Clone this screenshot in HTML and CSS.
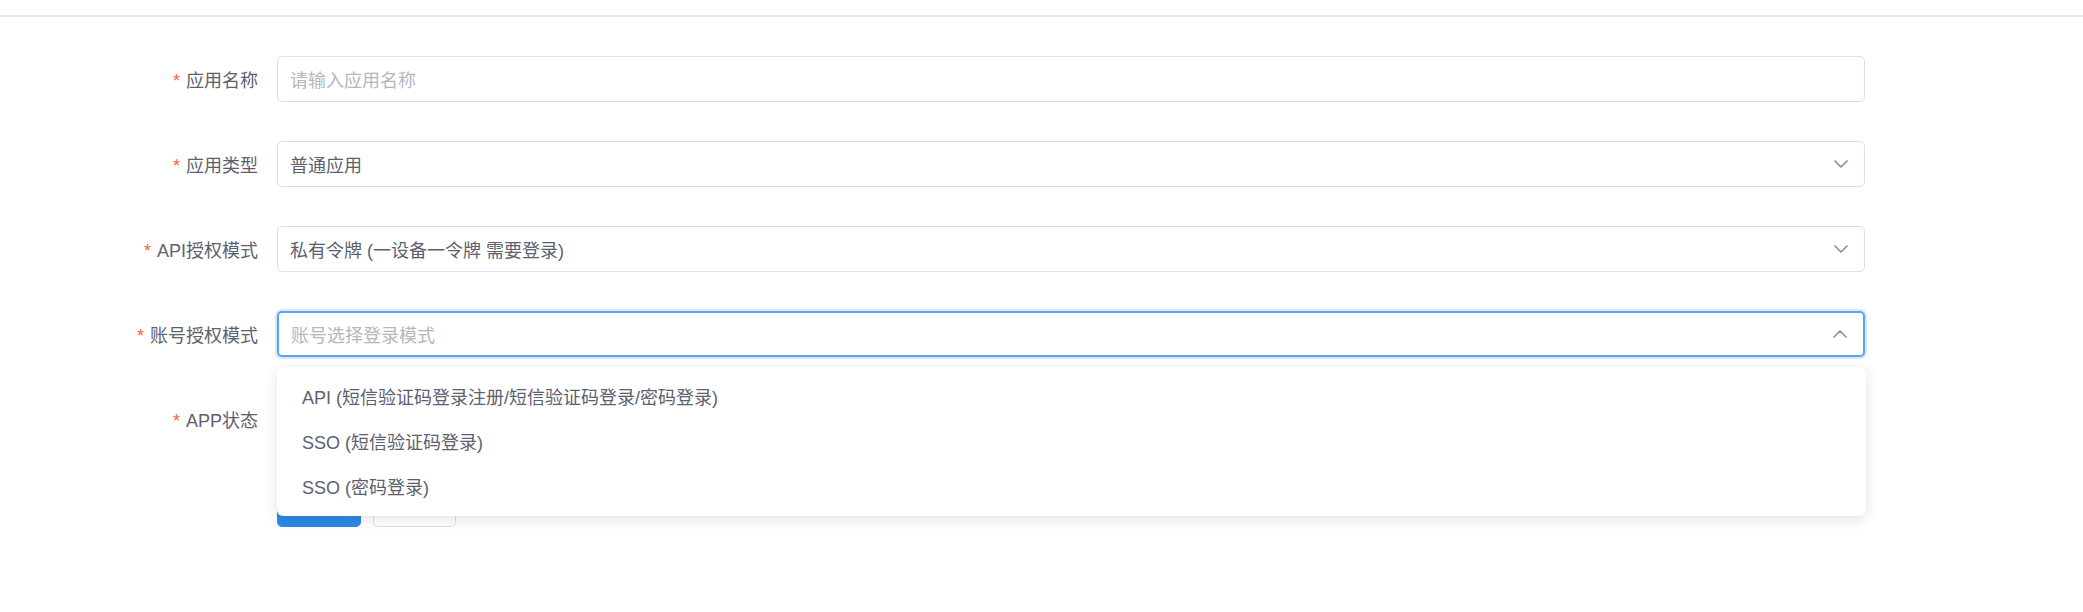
FILE: index.html
```html
<!DOCTYPE html>
<html lang="zh-CN">
<head>
<meta charset="utf-8">
<title>应用配置</title>
<link rel="stylesheet" href="styles.css">
</head>
<body>
<div class="topbar"></div>
<form class="form">
  <div class="item">
    <label class="label"><span class="req">*</span>应用名称</label>
    <div class="control">
      <div class="input"><span class="placeholder">请输入应用名称</span></div>
    </div>
  </div>
  <div class="item">
    <label class="label"><span class="req">*</span>应用类型</label>
    <div class="control">
      <div class="input select"><span class="value">普通应用</span>
        <svg class="arrow" width="14" height="8" viewBox="0 0 14 8"><path d="M1 1 L7 7 L13 1" fill="none" stroke="#8e929b" stroke-width="1.7" stroke-linecap="round" stroke-linejoin="round"/></svg>
      </div>
    </div>
  </div>
  <div class="item">
    <label class="label"><span class="req">*</span>API授权模式</label>
    <div class="control">
      <div class="input select"><span class="value">私有令牌 (一设备一令牌 需要登录)</span>
        <svg class="arrow" width="14" height="8" viewBox="0 0 14 8"><path d="M1 1 L7 7 L13 1" fill="none" stroke="#8e929b" stroke-width="1.7" stroke-linecap="round" stroke-linejoin="round"/></svg>
      </div>
    </div>
  </div>
  <div class="item">
    <label class="label"><span class="req">*</span>账号授权模式</label>
    <div class="control">
      <div class="input select focused"><span class="placeholder">账号选择登录模式</span>
        <svg class="arrow" width="14" height="8" viewBox="0 0 14 8"><path d="M1 7 L7 1 L13 7" fill="none" stroke="#8e929b" stroke-width="1.7" stroke-linecap="round" stroke-linejoin="round"/></svg>
      </div>
      <ul class="dropdown">
        <li>API (短信验证码登录注册/短信验证码登录/密码登录)</li>
        <li>SSO (短信验证码登录)</li>
        <li>SSO (密码登录)</li>
      </ul>
    </div>
  </div>
  <div class="item">
    <label class="label"><span class="req">*</span>APP状态</label>
    <div class="control"><div class="blank"></div></div>
  </div>
  <div class="item">
    <div class="label"></div>
    <div class="control buttons">
      <button type="button" class="btn primary">确定</button>
      <button type="button" class="btn">取消</button>
    </div>
  </div>
</form>
</body>
</html>
```
FILE: styles.css
```css
* { box-sizing: border-box; }
html, body { margin: 0; padding: 0; background: #fff; }
body {
  font-family: "Liberation Sans", "Noto Sans CJK SC", sans-serif;
  font-size: 18px;
  color: #5c6170;
}
.topbar {
  height: 17px;
  border-bottom: 2px solid #e6e7ea;
}
.form {
  margin: 0;
  padding-top: 39px;
}
.item {
  display: flex;
  align-items: center;
  gap: 19px;
  height: 46px;
  margin-bottom: 39px;
}
.label {
  width: 258px;
  flex: none;
  text-align: right;
  color: #5c6170;
  white-space: nowrap;
}
.req {
  color: #f5673f;
  margin-right: 6px;
}
.control {
  position: relative;
  width: 1588px;
  flex: none;
  height: 46px;
}
.input {
  height: 46px;
  border: 1.5px solid #dcdfe6;
  border-radius: 5px;
  padding: 0 12px;
  display: flex;
  align-items: center;
  background: #fff;
}
.placeholder { color: #b4b7be; }
.value { color: #5c6170; }
.select { justify-content: space-between; padding-right: 16px; }
.arrow { flex: none; }
.focused {
  border: 2px solid #58a3f5;
  box-shadow: 0 0 0 2px #d6e8fd;
}
.dropdown {
  position: absolute;
  z-index: 10;
  top: 56px;
  left: 0;
  width: 1589px;
  margin: 0;
  padding: 9px 0 5px;
  list-style: none;
  background: #fff;
  border-radius: 6px;
  box-shadow: 0 3px 14px rgba(0, 0, 0, 0.12);
}
.dropdown li {
  height: 45px;
  line-height: 45px;
  padding: 0 25px;
  color: #5c6170;
}
.blank { height: 46px; }
.buttons {
  display: flex;
  gap: 12px;
}
.btn {
  font: inherit;
  height: 46px;
  width: 83px;
  border-radius: 5px;
  border: 1.5px solid #dcdfe6;
  background: #fff;
  color: #5c6170;
}
.btn.primary {
  width: 84px;
  background: #2e89e8;
  border-color: #2e89e8;
  color: #fff;
}
```
